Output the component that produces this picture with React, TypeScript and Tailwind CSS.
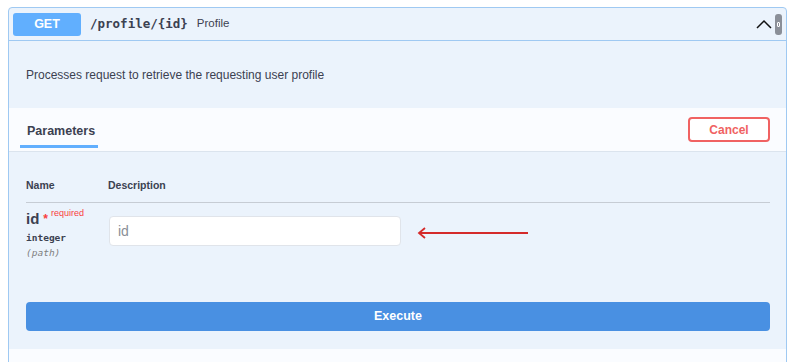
export default function App() {
  return (
    <div className="w-[800px] h-[362px] overflow-hidden bg-white pt-[7px] pl-[8px] font-['Liberation_Sans',Arial,sans-serif] text-[#3b4151]">
      <div className="w-[779px] border border-[#9fc9f2] rounded-[4px] bg-[#ebf3fc]">
        {/* Summary */}
        <div className="h-[33px] flex items-center pl-[4px] pr-[4px] border-b border-[#9fc9f2]">
          <span className="w-[68px] h-[23px] rounded-[3px] bg-[#61affe] text-white text-[12.5px] font-bold flex items-center justify-center">
            GET
          </span>
          <span className="ml-[9px] font-['DejaVu_Sans_Mono',monospace] font-bold text-[12.5px] text-[#3b4151]">
            /profile/{'{id}'}
          </span>
          <span className="ml-[9px] text-[11.5px] text-[#3b4151]">Profile</span>
          <div className="flex-1" />
          <svg width="16" height="10" viewBox="0 0 16 10" className="mr-[3px]">
            <path d="M1 9 L8 2 L15 9" fill="none" stroke="#111" strokeWidth="1.5" />
          </svg>
          <div className="w-[7px] h-[21px] rounded-[3px] bg-[#8a8f98] flex items-center justify-center">
            <div className="w-[3px] h-[5px] border border-white rounded-[1px]" />
          </div>
        </div>

        {/* Description */}
        <div className="h-[67px] flex items-center pl-[17px] text-[12px] text-[#3b4151]">
          Processes request to retrieve the requesting user profile
        </div>

        {/* Parameters header */}
        <div className="h-[44px] bg-[#fafcff] border-b border-[#dbe4ee] flex items-end justify-between pl-[11px] pr-[16px]">
          <div className="w-[78px] h-full flex flex-col justify-end pb-[3px]">
            <div className="flex-1 flex items-center pl-[7px] pt-[9px] text-[12.5px] font-bold text-[#3b4151]">Parameters</div>
            <div className="h-[3px] bg-[#61affe]" />
          </div>
          <button className="self-center w-[82px] h-[25px] rounded-[4px] border-2 border-[#f06262] text-[#f06262] text-[12px] font-bold bg-white">
            Cancel
          </button>
        </div>

        {/* Table */}
        <div className="px-[17px] pr-[16px]">
          <div className="flex items-end h-[51px] pb-[8px] border-b border-[#c6ccd4] text-[10.5px] font-bold text-[#3b4151]">
            <div className="w-[82px]">Name</div>
            <div>Description</div>
          </div>
          <div className="flex pt-[14px] h-[99px]">
            <div className="w-[83px] -mt-[7px]">
              <div className="flex items-start">
                <span className="text-[15px] font-bold leading-[18px]">id</span>
                <span className="ml-[4px] text-[#f93e3e] text-[12px] font-bold leading-[18px]">*</span>
                <span className="ml-[3px] text-[#f93e3e] text-[9px] leading-[11px] -mt-[2px]">required</span>
              </div>
              <div className="mt-[3px] font-['DejaVu_Sans_Mono',monospace] font-bold text-[9.5px] leading-[14px]">integer</div>
              <div className="mt-[1px] font-['DejaVu_Sans_Mono',monospace] italic text-[9.5px] leading-[14px] text-[#808080]">(path)</div>
            </div>
            <div className="flex items-start">
              <div className="w-[292px] h-[30px] mt-[-1px] rounded-[4px] border border-[#e0e4ea] bg-white flex items-center pl-[8px] text-[14px] text-[#8a8f98]">
                id
              </div>
              <svg width="112" height="12" viewBox="0 0 112 12" className="ml-[16px] mt-[10px]">
                <path d="M2 6 L111 6" stroke="#d42a2a" strokeWidth="1.8" />
                <path d="M8 1 L2 6 L8 11" fill="none" stroke="#d42a2a" strokeWidth="1.8" />
              </svg>
            </div>
          </div>
          <button className="w-full h-[29px] rounded-[4px] bg-[#4990e2] text-white text-[12.5px] font-bold">
            Execute
          </button>
          <div className="h-[18px]" />
        </div>
        <div className="h-[20px] bg-[#fafcff]" />
      </div>
    </div>
  )
}
